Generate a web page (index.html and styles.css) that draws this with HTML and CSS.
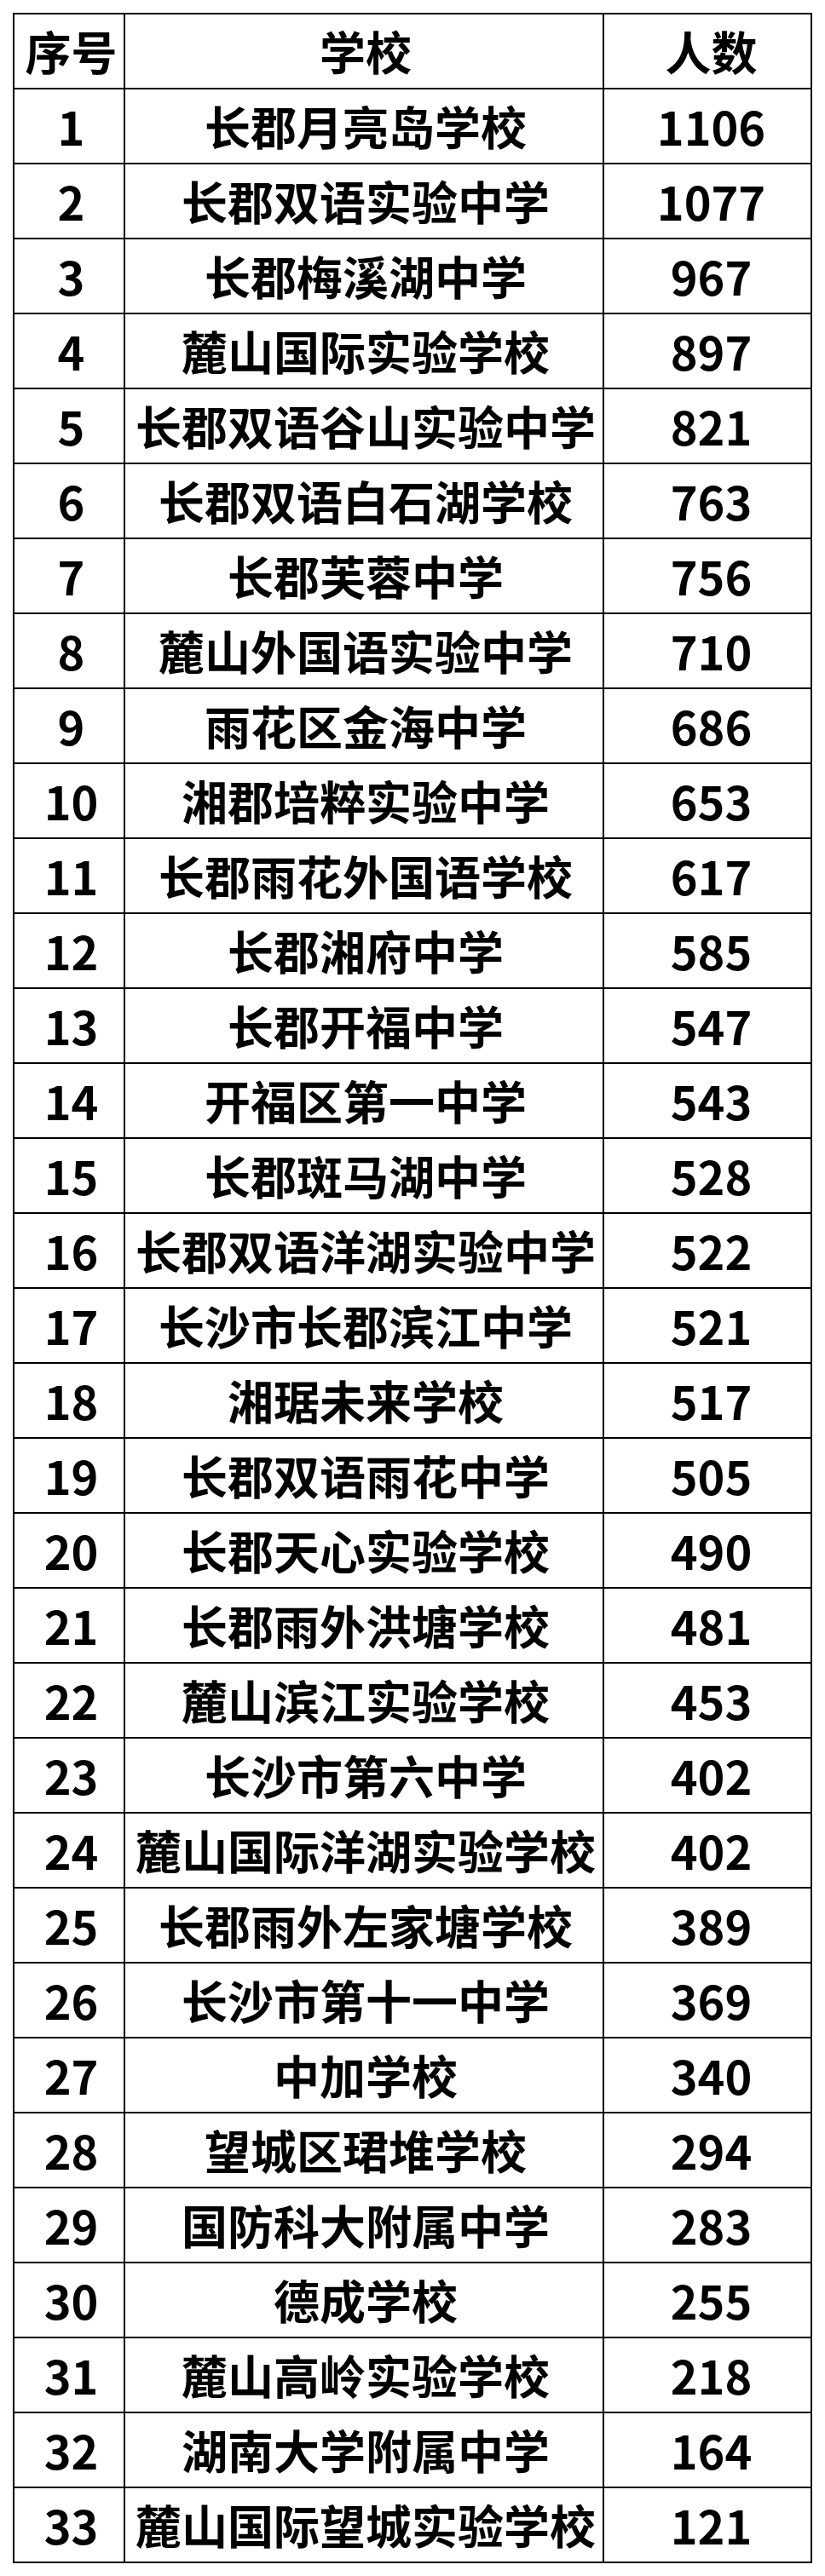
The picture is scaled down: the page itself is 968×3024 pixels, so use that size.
FILE: index.html
```html
<!DOCTYPE html>
<html lang="zh-CN">
<head>
<meta charset="utf-8">
<title>学校人数</title>
<link rel="stylesheet" href="styles.css">
</head>
<body>
<div class="sheet">
  <div class="cell c1 head">序号</div><div class="cell c2 head">学校</div><div class="cell c3 head">人数</div>
  <div class="cell c1">1</div><div class="cell c2">长郡月亮岛学校</div><div class="cell c3">1106</div>
  <div class="cell c1">2</div><div class="cell c2">长郡双语实验中学</div><div class="cell c3">1077</div>
  <div class="cell c1">3</div><div class="cell c2">长郡梅溪湖中学</div><div class="cell c3">967</div>
  <div class="cell c1">4</div><div class="cell c2">麓山国际实验学校</div><div class="cell c3">897</div>
  <div class="cell c1">5</div><div class="cell c2">长郡双语谷山实验中学</div><div class="cell c3">821</div>
  <div class="cell c1">6</div><div class="cell c2">长郡双语白石湖学校</div><div class="cell c3">763</div>
  <div class="cell c1">7</div><div class="cell c2">长郡芙蓉中学</div><div class="cell c3">756</div>
  <div class="cell c1">8</div><div class="cell c2">麓山外国语实验中学</div><div class="cell c3">710</div>
  <div class="cell c1">9</div><div class="cell c2">雨花区金海中学</div><div class="cell c3">686</div>
  <div class="cell c1">10</div><div class="cell c2">湘郡培粹实验中学</div><div class="cell c3">653</div>
  <div class="cell c1">11</div><div class="cell c2">长郡雨花外国语学校</div><div class="cell c3">617</div>
  <div class="cell c1">12</div><div class="cell c2">长郡湘府中学</div><div class="cell c3">585</div>
  <div class="cell c1">13</div><div class="cell c2">长郡开福中学</div><div class="cell c3">547</div>
  <div class="cell c1">14</div><div class="cell c2">开福区第一中学</div><div class="cell c3">543</div>
  <div class="cell c1">15</div><div class="cell c2">长郡斑马湖中学</div><div class="cell c3">528</div>
  <div class="cell c1">16</div><div class="cell c2">长郡双语洋湖实验中学</div><div class="cell c3">522</div>
  <div class="cell c1">17</div><div class="cell c2">长沙市长郡滨江中学</div><div class="cell c3">521</div>
  <div class="cell c1">18</div><div class="cell c2">湘琚未来学校</div><div class="cell c3">517</div>
  <div class="cell c1">19</div><div class="cell c2">长郡双语雨花中学</div><div class="cell c3">505</div>
  <div class="cell c1">20</div><div class="cell c2">长郡天心实验学校</div><div class="cell c3">490</div>
  <div class="cell c1">21</div><div class="cell c2">长郡雨外洪塘学校</div><div class="cell c3">481</div>
  <div class="cell c1">22</div><div class="cell c2">麓山滨江实验学校</div><div class="cell c3">453</div>
  <div class="cell c1">23</div><div class="cell c2">长沙市第六中学</div><div class="cell c3">402</div>
  <div class="cell c1">24</div><div class="cell c2">麓山国际洋湖实验学校</div><div class="cell c3">402</div>
  <div class="cell c1">25</div><div class="cell c2">长郡雨外左家塘学校</div><div class="cell c3">389</div>
  <div class="cell c1">26</div><div class="cell c2">长沙市第十一中学</div><div class="cell c3">369</div>
  <div class="cell c1">27</div><div class="cell c2">中加学校</div><div class="cell c3">340</div>
  <div class="cell c1">28</div><div class="cell c2">望城区珺堆学校</div><div class="cell c3">294</div>
  <div class="cell c1">29</div><div class="cell c2">国防科大附属中学</div><div class="cell c3">283</div>
  <div class="cell c1">30</div><div class="cell c2">德成学校</div><div class="cell c3">255</div>
  <div class="cell c1">31</div><div class="cell c2">麓山高岭实验学校</div><div class="cell c3">218</div>
  <div class="cell c1">32</div><div class="cell c2">湖南大学附属中学</div><div class="cell c3">164</div>
  <div class="cell c1">33</div><div class="cell c2">麓山国际望城实验学校</div><div class="cell c3">121</div>
</div>
</body>
</html>
```

FILE: styles.css
```css
html, body {
  margin: 0;
  padding: 0;
  background: #ffffff;
}

body {
  padding: 15px 0 0 15px;
  font-family: "Noto Sans CJK SC", "Noto Sans", sans-serif;
  font-weight: 700;
  color: #000000;
}

.sheet {
  display: grid;
  grid-template-columns: 128px 560px 242px;
  grid-auto-rows: 86px;
  gap: 2px;
  padding: 2px;
  width: 934px;
  background: #000000;
}

.cell {
  background: #ffffff;
  display: flex;
  align-items: center;
  justify-content: center;
  font-size: 54px;
  line-height: 1;
  white-space: nowrap;
  overflow: hidden;
}

.c1 {
  padding-left: 5px;
}

.c2 {
  padding-left: 4px;
}

.c3 {
  padding-left: 9px;
}
```
